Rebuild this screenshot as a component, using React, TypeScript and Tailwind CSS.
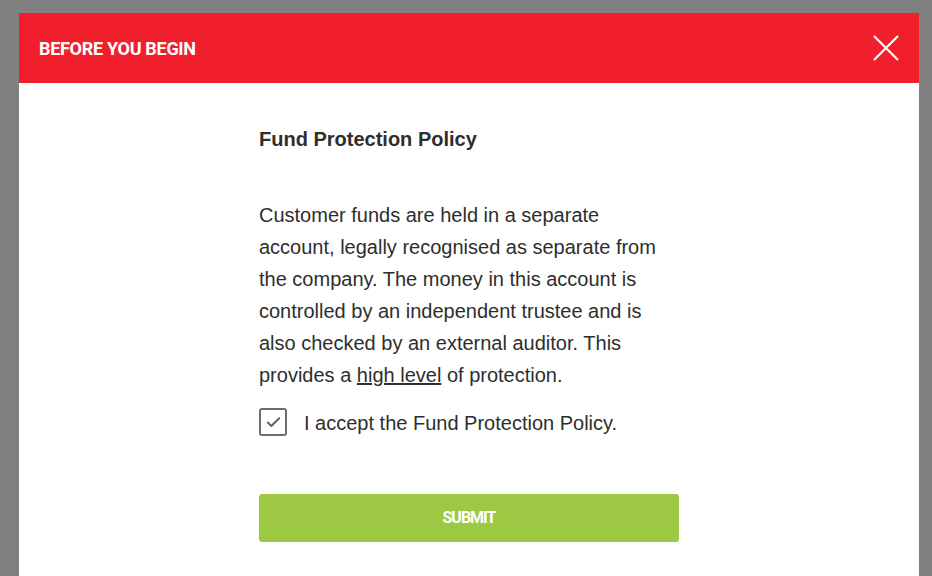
import { Check } from "lucide-react"

const para =
  "Customer funds are held in a separate account, legally recognised as separate from the company. The money in this account is controlled by an independent trustee and is also checked by an external auditor. This provides a "

export default function App() {
  return (
    <div className="h-[576px] overflow-hidden bg-[#808080] pl-[19px] pt-[13px]">
      <div className="h-[600px] w-[900px] bg-white">
        <div className="flex h-[70px] items-center justify-between bg-[#f01f2b] pl-[20px] pr-[20px]">
          <h2 className="font-['Roboto',sans-serif] text-[18px] font-bold tracking-[-0.3px] text-white">
            BEFORE YOU BEGIN
          </h2>
          <svg width="26" height="26" viewBox="0 0 26 26" className="text-white">
            <path d="M1 1L25 25M25 1L1 25" stroke="currentColor" strokeWidth="2.2" fill="none" />
          </svg>
        </div>

        <div className="mx-auto w-[420px] pt-[42px] font-['Liberation_Sans',Arial,sans-serif] text-[#2e2e2e]">
          <h3 className="text-[20px] leading-[28px] font-bold">Fund Protection Policy</h3>
          <p className="mt-[46px] text-[20px] leading-[32px]">
            {para}
            <span className="underline">high level</span> of protection.
          </p>

          <label className="mt-[16px] flex items-center gap-[17px]">
            <span className="flex h-[28px] w-[28px] items-center justify-center rounded-[3px] border-2 border-[#6d6f73]">
              <Check className="h-[17px] w-[17px] text-[#5c6370]" strokeWidth={2.8} />
            </span>
            <span className="pt-[2px] text-[20px] leading-[28px]">I accept the Fund Protection Policy.</span>
          </label>

          <button className="mt-[57px] h-[48px] w-full rounded-[3px] bg-[#9dc844] font-['Roboto',sans-serif] text-[16px] font-bold tracking-[-1px] text-white">
            SUBMIT
          </button>
        </div>
      </div>
    </div>
  )
}
